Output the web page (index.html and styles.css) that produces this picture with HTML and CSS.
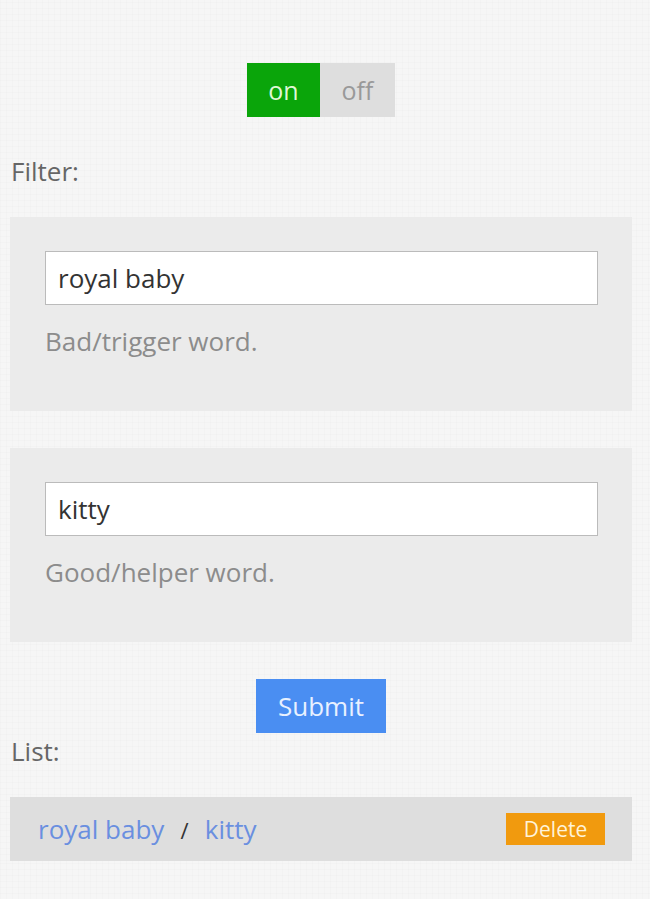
FILE: index.html
```html
<!DOCTYPE html>
<html>
<head>
    <title>Word Filter</title>
    <link rel="stylesheet" href="styles.css">
</head>
<body>
    <div id="app">
        <div class="toggle">
            <span class="toggle-on active">on</span>
            <span class="toggle-off">off</span>
        </div>

        <div class="section-label">Filter:</div>

        <form id="filter-form">
            <div class="panel">
                <input type="text" class="word-input" value="royal baby" />
                <div class="help">Bad/trigger word.</div>
            </div>

            <div class="panel">
                <input type="text" class="word-input" value="kitty" />
                <div class="help">Good/helper word.</div>
            </div>

            <div class="submit-row">
                <button type="submit" class="submit-btn">Submit</button>
            </div>
        </form>

        <div class="section-label list-label">List:</div>

        <div class="list">
            <div class="list-item">
                <span class="words">
                    <a href="#" class="word">royal baby</a>
                    <span class="sep">/</span>
                    <a href="#" class="word">kitty</a>
                </span>
                <button type="button" class="delete-btn">Delete</button>
            </div>
        </div>
    </div>
</body>
</html>
```

FILE: styles.css
```css
body {
    margin: 0;
    padding: 0;
    background-color: #f6f6f6;
    background-image:
        repeating-linear-gradient(0deg, rgba(0,0,0,0.012) 0 1px, transparent 1px 6px),
        repeating-linear-gradient(90deg, rgba(0,0,0,0.012) 0 1px, transparent 1px 6px);
    font-family: "Open Sans", "Noto Sans", sans-serif;
    color: #5a5a5a;
}

#app {
    width: 622px;
    margin-left: 10px;
    padding-top: 63px;
}

.toggle {
    display: flex;
    justify-content: center;
}

.toggle span {
    display: block;
    width: 75px;
    height: 54px;
    line-height: 54px;
    text-align: center;
    font-size: 25px;
    background-color: #dedede;
    color: #999;
}

.toggle span.active {
    width: 73px;
    background-color: #0aa50a;
    color: #dff7d6;
}

.section-label {
    font-size: 26px;
    color: #666;
    margin: 39px 0 0 1px;
    height: 30px;
    line-height: 30px;
}

#filter-form {
    margin-top: 31px;
}

.panel {
    background-color: #ebebeb;
    padding: 34px 34px 0 35px;
    height: 160px;
    margin-bottom: 37px;
}

.word-input {
    display: block;
    box-sizing: border-box;
    width: 100%;
    height: 54px;
    padding: 0 12px;
    border: 1px solid #bbb;
    background-color: #fff;
    font-family: inherit;
    font-size: 26px;
    color: #333;
}

.help {
    margin-top: 21px;
    font-size: 26px;
    line-height: 30px;
    color: #8c8c8c;
}

.submit-row {
    display: flex;
    justify-content: center;
    margin-top: 1px;
}

.submit-btn {
    width: 130px;
    height: 54px;
    border: none;
    background-color: #4a8ef2;
    color: #e8f1ff;
    font-family: inherit;
    font-size: 26px;
    padding: 0;
}

.list-label {
    margin-top: 3px;
}

.list {
    margin-top: 31px;
}

.list-item {
    display: flex;
    align-items: center;
    justify-content: space-between;
    height: 64px;
    padding: 0 27px 0 28px;
    background-color: #dedede;
}

.word {
    color: #6a8fe0;
    text-decoration: none;
    font-size: 26px;
}

.sep {
    color: #333;
    font-size: 22px;
    margin: 0 12px;
}

.delete-btn {
    width: 99px;
    height: 32px;
    border: none;
    padding: 0;
    background-color: #f19a0e;
    color: #fff3d9;
    font-family: inherit;
    font-size: 21px;
}
```
